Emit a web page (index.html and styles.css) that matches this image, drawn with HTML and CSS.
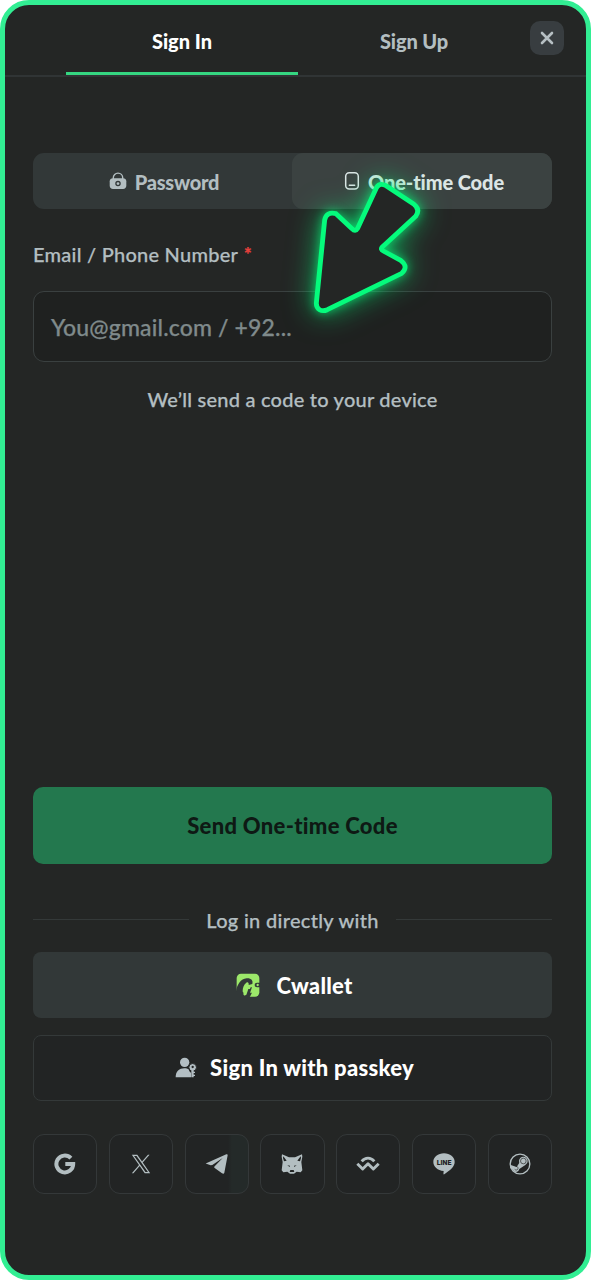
FILE: index.html
```html
<!DOCTYPE html>
<html lang="en">
<head>
<meta charset="utf-8">
<title>Sign In</title>
<link rel="stylesheet" href="styles.css">
</head>
<body>
<main class="card">
  <header class="header">
    <nav class="tabs">
      <a class="tab tab-active"><span>Sign In</span></a>
      <a class="tab"><span class="t-signup">Sign Up</span></a>
    </nav>
    <button class="close" aria-label="Close">
      <svg width="14" height="14" viewBox="0 0 14 14"><path d="M2 2l10 10M12 2L2 12" fill="none" stroke="#b6bfc3" stroke-width="2.600" stroke-linecap="round"/></svg>
    </button>
  </header>

  <section class="content">
    <div class="segments">
      <div class="segment">
        <svg width="18" height="18" viewBox="0 0 18 18"><path d="M4.300 8V5.800a4.700 4.700 0 0 1 9.400 0V8" fill="none" stroke="#b3bec1" stroke-width="1.400"/><path fill="#b3bec1" d="M4 6.200h10c2 0 3.300 1 3.300 3v4.600c0 2-1.300 3.200-3.300 3.200H4c-2 0-3.300-1.200-3.300-3.200V9.200c0-2 1.300-3 3.300-3z"/><circle cx="9" cy="11.600" r="2.100" fill="#b3bec1" stroke="#323838" stroke-width="1.300"/></svg>
        <span class="t-password">Password</span>
      </div>
      <div class="segment segment-active">
        <svg width="16" height="20" viewBox="0 0 16 20"><rect x="1.700" y="1.700" width="12.600" height="16.300" rx="3.500" fill="none" stroke="#dce5e5" stroke-width="1.500"/><path d="M5.300 14.300h5.400" stroke="#dce5e5" stroke-width="1.400" stroke-linecap="round"/></svg>
        <span class="t-code">One-time Code</span>
      </div>
    </div>

    <label class="label"><span class="t-label">Email / Phone Number</span><span class="required">*</span></label>
    <div class="field"><span class="t-field">You@gmail.com / +92...</span></div>
    <p class="hint"><span class="t-hint">We’ll send a code to your device</span></p>

    <button class="submit"><span class="t-submit">Send One-time Code</span></button>

    <div class="divider"><span class="t-divider">Log in directly with</span></div>

    <button class="alt alt-filled">
      <svg width="24" height="24" viewBox="0 0 72 72"><rect x="2" y="2" width="68" height="69" rx="13" fill="#9ce86a"/><path d="M0 55C3 36 14 17 32 16c13-1 20 6 17 17l-11 3c1-8-3-10-7-7-7 5-11 15-11 24 0 8 5 8 9 2l5-12h14l-5 14c0 5 3 4 5 1-2 6-4 10-7 14H0z" fill="#323838"/><path d="M22 62l6-18q2-5 7-5h10l-3 9h-5l-5 15c-2 6-10 6-10-1z" fill="#9ce86a"/><path d="M72 29h-9a6.500 6.500 0 0 0 0 14h9z" fill="#323838"/><circle cx="65" cy="36" r="3.500" fill="#9ce86a"/></svg>
      <span class="t-cwallet">Cwallet</span>
    </button>
    <button class="alt alt-outline">
      <svg width="22" height="22" viewBox="0 0 66 66"><circle cx="29" cy="16" r="14" fill="#b3bec3"/><path d="M2 61C2 43 13 34 28 34c6 0 10 1 14 4 0 4 3 7 6 9v14z" fill="#b3bec3"/><circle cx="53" cy="31" r="11.500" fill="#b3bec3" stroke="#222424" stroke-width="3"/><path d="M49 39h7v5h4v4h-4v5h4v4h-4v4h-7z" fill="#b3bec3"/><circle cx="53" cy="30" r="3.500" fill="#222424"/></svg>
      <span class="t-passkey">Sign In with passkey</span>
    </button>

    <div class="socials">
      <button class="social" aria-label="Google"><svg width="22" height="22" viewBox="0 0 22 22"><path d="M16.900 5.200A8.400 8.400 0 1 0 19.200 11H11.300" fill="none" stroke="#b3bec1" stroke-width="4"/></svg></button>
      <button class="social" aria-label="X"><svg width="20" height="20" viewBox="0 0 24 24"><path fill="#b3bec1" d="M14.095 10.317 22.286 1h-1.941l-7.112 8.088L7.551 1H1l8.590 12.231L1 23h1.941l7.510-8.543L16.451 23H23l-8.905-12.683zm-2.658 3.022-.871-1.218L3.640 2.432h2.982l5.592 7.821.869 1.219 7.265 10.166h-2.982l-5.929-8.299z"/></svg></button>
      <button class="social social-shaded" aria-label="Telegram"><svg width="24" height="20" viewBox="0 0 72 60"><path fill="#b3bec1" d="M2 28.500 64 1c3-1 4 0 4 3L58 56c-1 4-4 4-7 2L29 42c-2-2-2-3 0-5l24-25-31 21-5 1z"/></svg></button>
      <button class="social" aria-label="MetaMask"><svg width="22" height="20" viewBox="0 0 66 60"><path fill="#b3bec1" fill-rule="evenodd" d="M3 1l21 9h18L63 1l1 7-3 16 3 25-5 6-12-2-8 6H27l-8-6-12 2-5-6 3-25-3-16zm4 6l-1 5 3 10 8-2zm52 0L49 20l8 2 3-10zM19 34l7 5 1-4zm28 0l-7 5-1-4zM28 48l-2 6h14l-2-6z"/></svg></button>
      <button class="social" aria-label="WalletConnect"><svg width="24" height="16" viewBox="0 0 72 48"><g fill="none" stroke="#b3bec1" stroke-width="8.500" stroke-linejoin="round"><path d="M17 16c11-13 27-13 38 0"/><path d="M4 23l16 16 16-16 16 16 16-16"/></g></svg></button>
      <button class="social" aria-label="Line"><svg width="22" height="22" viewBox="0 0 66 66"><path fill="#b3bec1" d="M33 1c18 0 32 11 32 26 0 14-14 25-31 37-3 1-3-1-2-10C14 53 1 41 1 27 1 12 15 1 33 1z"/><text class="line-word" x="33" y="36" text-anchor="middle" textLength="44" lengthAdjust="spacingAndGlyphs">LINE</text></svg></button>
      <button class="social" aria-label="Steam"><svg width="22" height="22" viewBox="0 0 66 66"><circle cx="33" cy="33" r="29.500" fill="none" stroke="#b3bec1" stroke-width="4"/><path d="M3 35l20 7 11-17 16 10-19 13c-2 10-15 12-19 3L4 45z" fill="#b3bec1"/><circle cx="43" cy="24" r="13" fill="#b3bec1"/><circle cx="43" cy="24" r="8.500" fill="none" stroke="#222424" stroke-width="2"/><path d="M17 49c4 4 10 2 10-3s-3-6-7-6" fill="none" stroke="#222424" stroke-width="2"/></svg></button>
    </div>
  </section>

  <svg class="pointer" width="150" height="190" viewBox="0 0 450 570">
    <path d="M288 146Q296 126 318 137L402 193Q422 208 407 229L306 322Q301 328 310 333L362 361Q387 380 365 400L142 509C124 517 109 508 109 490L134 240Q139 214 168 221L216 266Q226 277 233 265Z" fill="#242625" stroke="#05fb7c" stroke-width="14.500" stroke-linejoin="round"/>
  </svg>
</main>
</body>
</html>
```
FILE: styles.css
```css
* { box-sizing: border-box; }
body {
  margin: 0;
  background: #fff;
  font-family: Lato, "Open Sans", sans-serif;
  font-variant-ligatures: none;
  color: #b3bec1;
}
button { font: inherit; font-variant-ligatures: none; color: inherit; padding: 0; border: 0; margin: 0; }
svg { display: block; flex: none; }
span { white-space: nowrap; }

.card {
  position: relative;
  width: 591px;
  height: 1280px;
  border: 5px solid #32ee93;
  border-radius: 29px;
  background: #242625;
}

.header {
  display: flex;
  height: 72px;
  padding: 0 22px 0 61px;
  border-bottom: 2px solid #303435;
}
.tabs { display: flex; flex: none; width: 464px; height: 70px; }
.tab {
  flex: 1;
  display: flex;
  align-items: center;
  justify-content: center;
  padding-top: 4px;
  border-bottom: 3px solid transparent;
  font-size: 20px;
  font-weight: 900;
}
.tab-active { color: #fff; border-color: #35d681; }
.close {
  display: flex;
  flex: none;
  align-items: center;
  justify-content: center;
  width: 34px;
  height: 34px;
  margin-top: 16px;
  border-radius: 10px;
  background: #383d40;
}

.content { display: flex; flex-direction: column; padding: 76px 34px 0 28px; }

.segments {
  display: flex;
  height: 55.500px;
  border-radius: 11px;
  background: #323838;
}
.segment {
  flex: 1;
  display: flex;
  align-items: center;
  justify-content: center;
  gap: 8px;
  padding: 2px 0 0 3px;
  border-radius: 11px;
  font-size: 20px;
  font-weight: 900;
}
.segment svg { margin-bottom: 1px; }
.segment-active { padding-left: 4px; background: #3b4241; color: #dce5e5; }

.label, .hint, .divider, .field { -webkit-text-stroke: .25px currentColor; }

.label {
  display: flex;
  gap: 6px;
  height: 24px;
  margin-top: 33.500px;
  font-size: 20px;
  line-height: 24px;
  font-weight: 500;
}
.required { color: #e5403c; font-weight: 900; font-size: 18px; line-height: 25px; }

.field {
  display: flex;
  align-items: center;
  height: 71px;
  margin-top: 25px;
  padding: 0 17px;
  border: 1px solid #3a4040;
  border-radius: 11px;
  background: #1f2120;
  color: #7f8a8b;
  font-size: 23px;
  font-weight: 500;
}
.hint {
  display: flex;
  justify-content: center;
  height: 24px;
  margin: 25px 0 0;
  font-size: 20px;
  line-height: 24px;
  font-weight: 500;
}

.submit {
  height: 77px;
  margin-top: 376px;
  border-radius: 10px;
  background: #23784e;
  color: #0e1914;
  font-size: 22px;
  font-weight: 900;
}

.divider {
  display: flex;
  align-items: center;
  gap: 17px;
  height: 24px;
  margin-top: 43.500px;
  font-size: 20px;
  line-height: 24px;
  font-weight: 500;
}
.divider::before, .divider::after { content: ""; flex: 1; height: 1px; background: #343939; }

.alt {
  display: flex;
  align-items: center;
  justify-content: center;
  height: 66px;
  padding-left: 4px;
  border-radius: 8px;
  color: #fff;
  font-size: 22px;
  font-weight: 900;
}
.alt-filled { gap: 16px; margin-top: 20.500px; background: #323838; }
.alt-outline { gap: 13px; margin-top: 16.500px; background: #222424; border: 1px solid #343939; }

.socials {
  display: grid;
  grid-template-columns: repeat(7, 1fr);
  gap: 11.500px;
  margin-top: 33px;
}
.social {
  display: flex;
  align-items: center;
  justify-content: center;
  height: 60px;
  border: 1px solid #343839;
  border-radius: 11px;
  background: #222424;
}
.social-shaded { background: linear-gradient(90deg, #222424 68%, #242a29 74%); }
.line-word { font: 900 20px Roboto, sans-serif; fill: #222424; }

.t-signup { letter-spacing: -.1px; }
.t-password { letter-spacing: -.25px; }
.t-code { letter-spacing: -.1px; }
.t-label { letter-spacing: .25px; }
.t-field { letter-spacing: .15px; }
.t-hint { letter-spacing: .23px; }
.t-submit { letter-spacing: .3px; }
.t-divider { letter-spacing: .3px; }
.t-cwallet { letter-spacing: .25px; }
.t-passkey { letter-spacing: .27px; }

.pointer {
  position: absolute;
  left: 275px;
  top: 135px;
  overflow: visible;
  filter: drop-shadow(0 0 5px rgba(5, 251, 124, .6)) drop-shadow(0 0 14px rgba(5, 251, 124, .6));
}
```
